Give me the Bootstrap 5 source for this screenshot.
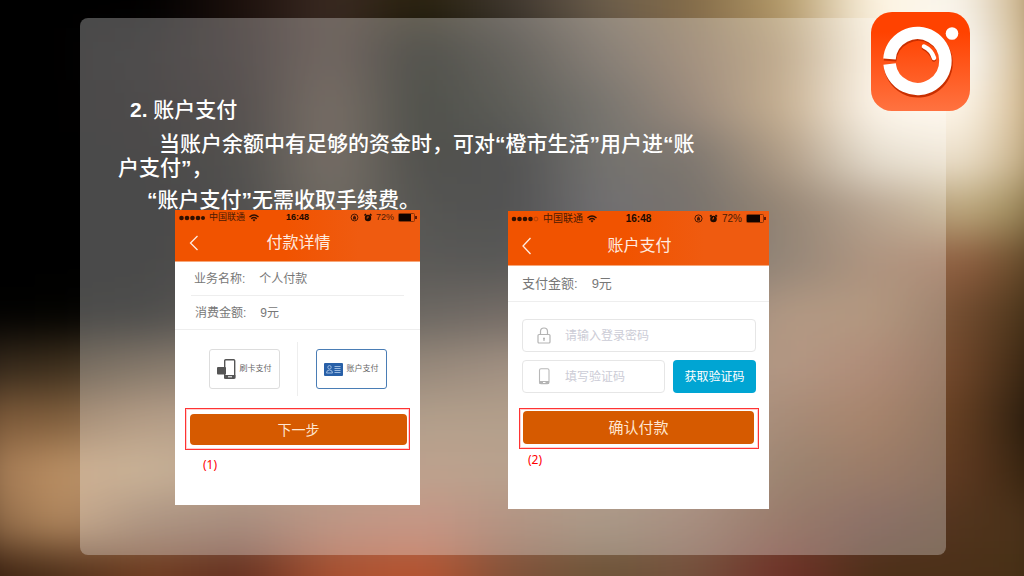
<!DOCTYPE html>
<html lang="zh-CN">
<head>
<meta charset="utf-8">
<meta name="viewport" content="width=device-width, initial-scale=1">
<title>账户支付</title>
<link href="https://cdn.jsdelivr.net/npm/bootstrap@5.3.0/dist/css/bootstrap.min.css" rel="stylesheet">
<style>
body{font-family:"Liberation Sans","Noto Sans CJK SC",sans-serif;background:#000}
.slide{padding:18px 78px 20px 80px;isolation:isolate}
/* blurred photo backdrop: stacked colour bands, softened together */
.backdrop{inset:0;z-index:-1}
.bands{position:absolute;inset:-24px -32px;filter:blur(20px)}
.bands div{flex:1}
.bands div:first-child{margin-top:-48px;padding-top:48px}
.bands div:last-child{margin-bottom:-48px;padding-bottom:48px}
.panel{background:rgba(255,255,255,.29);border-radius:8px;padding:80px 38px 46px}
.app-logo{top:11px;right:53px;width:101px;height:101px}
.copy{max-width:590px;font-size:21px;line-height:24px;font-weight:500;color:#fff}
.copy p{margin-bottom:8px}
.copy .lead-in{text-indent:12px;margin-bottom:10px}
.copy .body-text{text-indent:41px}
.copy .note-text{text-indent:29px;margin-bottom:-2px}
.screens{padding-left:57px;gap:88px}
.screen{background:#fff;color:#777;line-height:1}
.screen-a{flex:0 1 245px;font-size:12px;padding-bottom:33px}
.screen-b{flex:0 1 261px;font-size:13px;padding-bottom:42px;margin-top:1px}
.top-bar{background:linear-gradient(90deg,#f15300 45%,#ef5b10 75%);border-bottom:1px solid #f6a77a;color:#fff}
.status{height:15px;padding:0 3px;color:#4c1a04}
.status svg{flex:none}
.screen-a .status{font-size:9px}
.screen-b .status{font-size:10px}
.status .clock{color:#200a00;font-weight:700}
.status>*{flex:1}
.title-row{height:36px;padding:0 14px;color:#ffece0}
.screen-b .title-row{height:39px}
.title-row h2{font-size:16px;font-weight:400;line-height:1;color:#ffece0}
.back{flex:0 0 10px}
.detail{height:34px;padding:0 3px;border-bottom:1px solid #eee}
.detail .val{margin-left:14px}
.screen-b .detail{height:36px;padding:0 14px}
.opts{height:78px}
.opts .side{flex:1}
.opts .split{width:1px;height:54px;background:#eee}
.opt{width:71px;height:40px;border:1px solid #ddd;border-radius:3px;background:#fff;font-size:8px;color:#666;padding:0}
.opt.on{border-color:#4a7db5}
.callout{border:1px solid #f33;box-shadow:inset 0 0 0 1px rgba(255,60,60,.25)}
.callout-a{margin:0 10px;padding:5px 2px 4px 4px}
.callout-b{margin:15px 10px 0 11px;padding:2px 4px 4px 3px}
.main-btn{background:#d65a00;color:#ffe6d0;border:0;border-radius:4px;width:100%;line-height:1}
.callout-a .main-btn{height:31px;font-size:14px}
.callout-b .main-btn{height:33px;font-size:15px}
.tag{font-family:"Noto Sans","Open Sans",sans-serif;font-size:12px;line-height:14px;color:#f00}
.form-part{padding:17px 13px 0 14px}
.field{height:33px;border:1px solid #e6e6e6;border-radius:4px;padding-left:14px}
.field input{border:0;outline:0;background:none;width:100%;min-width:0;font-size:12px;padding:0;margin-left:14px;color:#777}
.field input::placeholder{color:#ccccd6;opacity:1}
.field svg{flex:none}
.code-btn{flex:0 0 83px;height:33px;background:#00a5d3;color:#fff;border:0;border-radius:4px;font-size:12px;padding:0}
</style>
<script src="https://cdn.jsdelivr.net/npm/bootstrap@5.3.0/dist/js/bootstrap.bundle.min.js"></script>
</head>
<body>
<main class="slide position-relative min-vh-100 overflow-hidden">
  <div class="backdrop position-absolute overflow-hidden" aria-hidden="true">
    <div class="bands d-flex flex-column">
      <div style="background:linear-gradient(90deg,#000,#000,#000,#1c100c,#3a2a22,#2a220e,#403830,#6c5e4c,#846c48,#b49a68,#fff6e4,#f8f4ec,#b08c50)"></div>
      <div style="background:linear-gradient(90deg,#000,#000,#080404,#180e0c,#3a2a22,#0c0c04,#28241c,#584c40,#80664c,#a88a60,#fcf0dc,#fff,#b89458)"></div>
      <div style="background:linear-gradient(90deg,#000,#000,#060202,#120a08,#423428,#080a02,#1c1c14,#403c34,#745c48,#b09064,#fff4e4,#fff8ec,#bc9860)"></div>
      <div style="background:linear-gradient(90deg,#000,#000,#020000,#0c0a06,#42362a,#0a0a04,#0c0c0c,#3c3a34,#483e34,#907352,#ded3be,#f0e4d0,#b09460)"></div>
      <div style="background:linear-gradient(90deg,#000,#000,#000,#080606,#383024,#10100c,#0c0c0c,#38363a,#403830,#68523b,#9b7f63,#c0ac80,#847040)"></div>
      <div style="background:linear-gradient(90deg,#000,#000,#000,#0c0804,#201a14,#181612,#141412,#302c28,#4c4038,#685440,#906a4c,#905e40,#50401e)"></div>
      <div style="background:linear-gradient(90deg,#000,#020200,#060604,#201812,#302820,#302a22,#3c3028,#4c4034,#64503f,#947052,#956e4c,#704a2e,#382a10)"></div>
      <div style="background:linear-gradient(90deg,#32261a,#3c2e1c,#54422e,#604e3c,#605040,#6c5844,#7c6450,#84684e,#84644e,#956e52,#905d41,#6c4428,#241a08)"></div>
      <div style="background:linear-gradient(90deg,#7c5838,#805e3c,#987656,#94785c,#84705a,#94785c,#94785c,#94745c,#90705a,#845d41,#845230,#603c20,#141006)"></div>
      <div style="background:linear-gradient(90deg,#98704c,#bc9064,#b4946e,#a08060,#98785c,#a47c60,#9c7c60,#94745a,#90705a,#735236,#73462a,#5c3820,#281c08)"></div>
      <div style="background:linear-gradient(90deg,#805c3c,#b48a60,#8c6a50,#845e4a,#a46c54,#b06c54,#946850,#887058,#84604c,#70442e,#5d362a,#50341c,#483018)"></div>
      <div style="background:linear-gradient(90deg,#381e0e,#4c2e18,#703c20,#643020,#a85030,#b85430,#805038,#6c5438,#74503c,#703028,#4c3018,#4c3018,#443014)"></div>
    </div>
  </div>

  <section class="panel">
    <div class="copy">
      <p class="lead-in"><strong>2.</strong> 账户支付</p>
      <p class="body-text">当账户余额中有足够的资金时，可对<strong>“</strong>橙市生活<strong>”</strong>用户进<strong>“</strong>账户支付<strong>”</strong>，</p>
      <p class="note-text"><strong>“</strong>账户支付<strong>”</strong>无需收取手续费。</p>
    </div>

    <div class="screens d-flex align-items-start position-relative">
      <article class="screen screen-a">
        <header class="top-bar">
          <div class="status d-flex align-items-center">
            <span class="d-flex align-items-center text-nowrap">
              <svg width="27" height="6" viewBox="0 0 27 6" fill="#301000"><circle cx="3.500" cy="3" r="2.300"/><circle cx="9" cy="3" r="2.300"/><circle cx="14.500" cy="3" r="2.300"/><circle cx="20" cy="3" r="2.300"/><circle cx="25" cy="3" r="2"/></svg>
              <span class="mx-1">中国联通</span>
              <svg width="10" height="8" viewBox="0 0 10 8" fill="none" stroke="#301000" stroke-width="1.400"><path d="M.5 2.900Q5-1.100 9.500 2.900M2.200 4.700Q5 2.300 7.800 4.700"/><path d="M3.500 5.800Q5 4.600 6.500 5.800L5 7.500Z" fill="#301000" stroke="none"/></svg>
            </span>
            <span class="clock flex-grow-0">16:48</span>
            <span class="d-flex align-items-center justify-content-end">
              <svg width="22" height="9" viewBox="0 0 22 9"><circle cx="4.500" cy="4.500" r="3.400" fill="none" stroke="#4c1a04"/><path d="M3 4h3v2.500H3zM3.500 4V3q1-1.200 2 0v1" fill="#4c1a04"/><circle cx="18" cy="5" r="3.200" fill="#200a00"/><path d="M14.500 2.500 16 1M21.500 2.500 20 1" stroke="#200a00" stroke-width="1.500"/><path d="M18 3v2h-1.500" fill="none" stroke="#f15300" stroke-width=".8"/></svg>
              <span class="ms-1">72%</span>
              <svg class="ms-1" width="19" height="9" viewBox="0 0 19 9"><rect x=".5" y=".5" width="16" height="8" rx="1" fill="none" stroke="#8c3408"/><rect x="1" y="1" width="12" height="7" fill="#100400"/><path d="M18 3v3" stroke="#300" stroke-width="1.500"/></svg>
            </span>
          </div>
          <div class="title-row d-flex align-items-center">
            <svg class="back" width="10" height="16" viewBox="0 0 10 16" fill="none" stroke="#ffece0" stroke-width="1.300"><path d="M8.500 1 1.500 8l7 7"/></svg>
            <h2 class="flex-grow-1 text-center m-0 pe-2">付款详情</h2>
          </div>
        </header>
        <div class="px-3">
          <div class="detail d-flex align-items-center"><span>业务名称:</span><span class="val">个人付款</span></div>
        </div>
        <div class="detail px-3"><div class="d-flex align-items-center h-100 ps-1"><span>消费金额:</span><span class="val">9元</span></div></div>
        <div class="opts d-flex align-items-center">
          <div class="side d-flex justify-content-center ps-3">
            <button type="button" class="opt d-flex align-items-center justify-content-center gap-1">
              <svg width="19" height="22" viewBox="0 0 19 22"><rect x="7.700" y="1.700" width="10" height="18.600" rx="1" fill="#fff" stroke="#555" stroke-width="1.400"/><path d="M7 17h11.400v3.500H7z" fill="#555"/><path d="M11 18.800h4" stroke="#fff"/><rect x="0" y="9" width="9" height="7.500" rx="1" fill="#555"/></svg>
              刷卡支付</button>
          </div>
          <div class="split"></div>
          <div class="side d-flex justify-content-center pe-3">
            <button type="button" class="opt on d-flex align-items-center justify-content-center gap-1">
              <svg width="19" height="13" viewBox="0 0 19 13"><rect width="19" height="13" rx="1" fill="#2860a8"/><g fill="none" stroke="#a8c4e6" stroke-width=".9"><circle cx="5.500" cy="4.300" r="1.700"/><path d="M2.500 10q0-3 3-3t3 3zM10.500 3.500h6M10.500 5.500h6M10.500 7.500h6M10.500 9.500h6"/></g></svg>
              账户支付</button>
          </div>
        </div>
        <div class="callout callout-a"><button type="button" class="main-btn">下一步</button></div>
        <div class="tag mt-2 ms-4 ps-1">(1)</div>
      </article>

      <article class="screen screen-b">
        <header class="top-bar">
          <div class="status d-flex align-items-center">
            <span class="d-flex align-items-center text-nowrap">
              <svg width="28" height="6" viewBox="0 0 28 6" fill="#301000"><circle cx="3" cy="3" r="2.300"/><circle cx="8.500" cy="3" r="2.300"/><circle cx="14" cy="3" r="2.300"/><circle cx="19.500" cy="3" r="2.300"/><circle cx="25" cy="3" r="1.900" fill="none" stroke="#a03c08" stroke-width=".7"/></svg>
              <span class="me-1 ps-1">中国联通</span>
              <svg width="10" height="8" viewBox="0 0 10 8" fill="none" stroke="#301000" stroke-width="1.400"><path d="M.5 2.900Q5-1.100 9.500 2.900M2.200 4.700Q5 2.300 7.800 4.700"/><path d="M3.500 5.800Q5 4.600 6.500 5.800L5 7.500Z" fill="#301000" stroke="none"/></svg>
            </span>
            <span class="clock flex-grow-0">16:48</span>
            <span class="d-flex align-items-center justify-content-end">
              <svg width="24" height="9" viewBox="0 0 24 9"><circle cx="4.500" cy="4.500" r="3.600" fill="none" stroke="#4c1a04"/><path d="M3 4h3v2.500H3zM3.500 4V3q1-1.200 2 0v1" fill="#4c1a04"/><circle cx="19.500" cy="5" r="3.300" fill="#200a00"/><path d="M16 2.500 17.500 1M23 2.500 21.500 1" stroke="#200a00" stroke-width="1.500"/><path d="M19.500 3v2H18" fill="none" stroke="#f15300" stroke-width=".8"/></svg>
              <span class="ms-1">72%</span>
              <svg class="ms-1" width="20" height="9" viewBox="0 0 20 9"><rect x=".5" y=".5" width="17" height="8" rx="1" fill="none" stroke="#8c3408"/><rect x="1" y="1" width="13" height="7" fill="#100400"/><path d="M19 3v3" stroke="#300" stroke-width="1.500"/></svg>
            </span>
          </div>
          <div class="title-row d-flex align-items-center">
            <svg class="back" width="10" height="18" viewBox="0 0 10 18" fill="none" stroke="#ffece0" stroke-width="1.300"><path d="M8.500 1 1 9l7.500 8"/></svg>
            <h2 class="flex-grow-1 text-center m-0 pe-2">账户支付</h2>
          </div>
        </header>
        <div class="detail d-flex align-items-center"><span>支付金额:</span><span class="val">9元</span></div>
        <form class="form-part">
          <div class="field d-flex align-items-center">
            <svg width="14" height="17" viewBox="0 0 14 17" fill="none" stroke="#b4b4b4" stroke-width="1.200"><rect x="1" y="7.500" width="12" height="8.500" rx="1"/><path d="M3.500 7.500V4.500q0-3.500 3.500-3.500t3.500 3.500v3M7 11v3"/><circle cx="7" cy="11.500" r="1" fill="#b4b4b4" stroke="none"/></svg>
            <input type="password" placeholder="请输入登录密码" aria-label="登录密码">
          </div>
          <div class="d-flex gap-2 mt-2">
            <div class="field d-flex align-items-center flex-grow-1">
              <svg width="14" height="17" viewBox="0 0 14 17"><rect x="2.500" y=".8" width="9.500" height="15" rx="1.500" fill="#fff" stroke="#b8b8b8" stroke-width="1.100"/><path d="M2.500 13h9.500v3h-9.500z" fill="#b4b4b4"/><path d="M6 14.500h2.500" stroke="#fff"/></svg>
              <input type="text" placeholder="填写验证码" aria-label="验证码">
            </div>
            <button type="button" class="code-btn">获取验证码</button>
          </div>
        </form>
        <div class="callout callout-b"><button type="button" class="main-btn">确认付款</button></div>
        <div class="tag mt-1 ms-3 ps-1">(2)</div>
      </article>
    </div>
  </section>

  <svg class="app-logo position-absolute" viewBox="0 0 101 101" role="img" aria-label="橙市生活">
    <defs><linearGradient id="orange" x2="0" y2="1"><stop offset=".2" stop-color="#ff4200"/><stop offset="1" stop-color="#ff7240"/></linearGradient></defs>
    <rect x="1" y="1" width="99" height="99" rx="21" fill="url(#orange)"/>
    <g fill="none" stroke-width="12.500">
      <path d="M20 49A28.300 28.300 0 1 1 20 53" stroke="#c92f00" transform="translate(0 1)"/>
      <path d="M19.500 48A28 28 0 1 1 19.600 53" stroke="#fff"/>
    </g>
    <circle cx="82" cy="22.500" r="6.300" fill="#fff"/>
    <path d="M54 36q7 3.500 10 11.500" fill="none" stroke="#c92f00" stroke-width="4.500" stroke-linecap="round" transform="translate(0 1)"/>
    <path d="M54 35.500q7.500 3.500 10 11.500" fill="none" stroke="#fff" stroke-width="4.500" stroke-linecap="round"/>
  </svg>
</main>
</body>
</html>
